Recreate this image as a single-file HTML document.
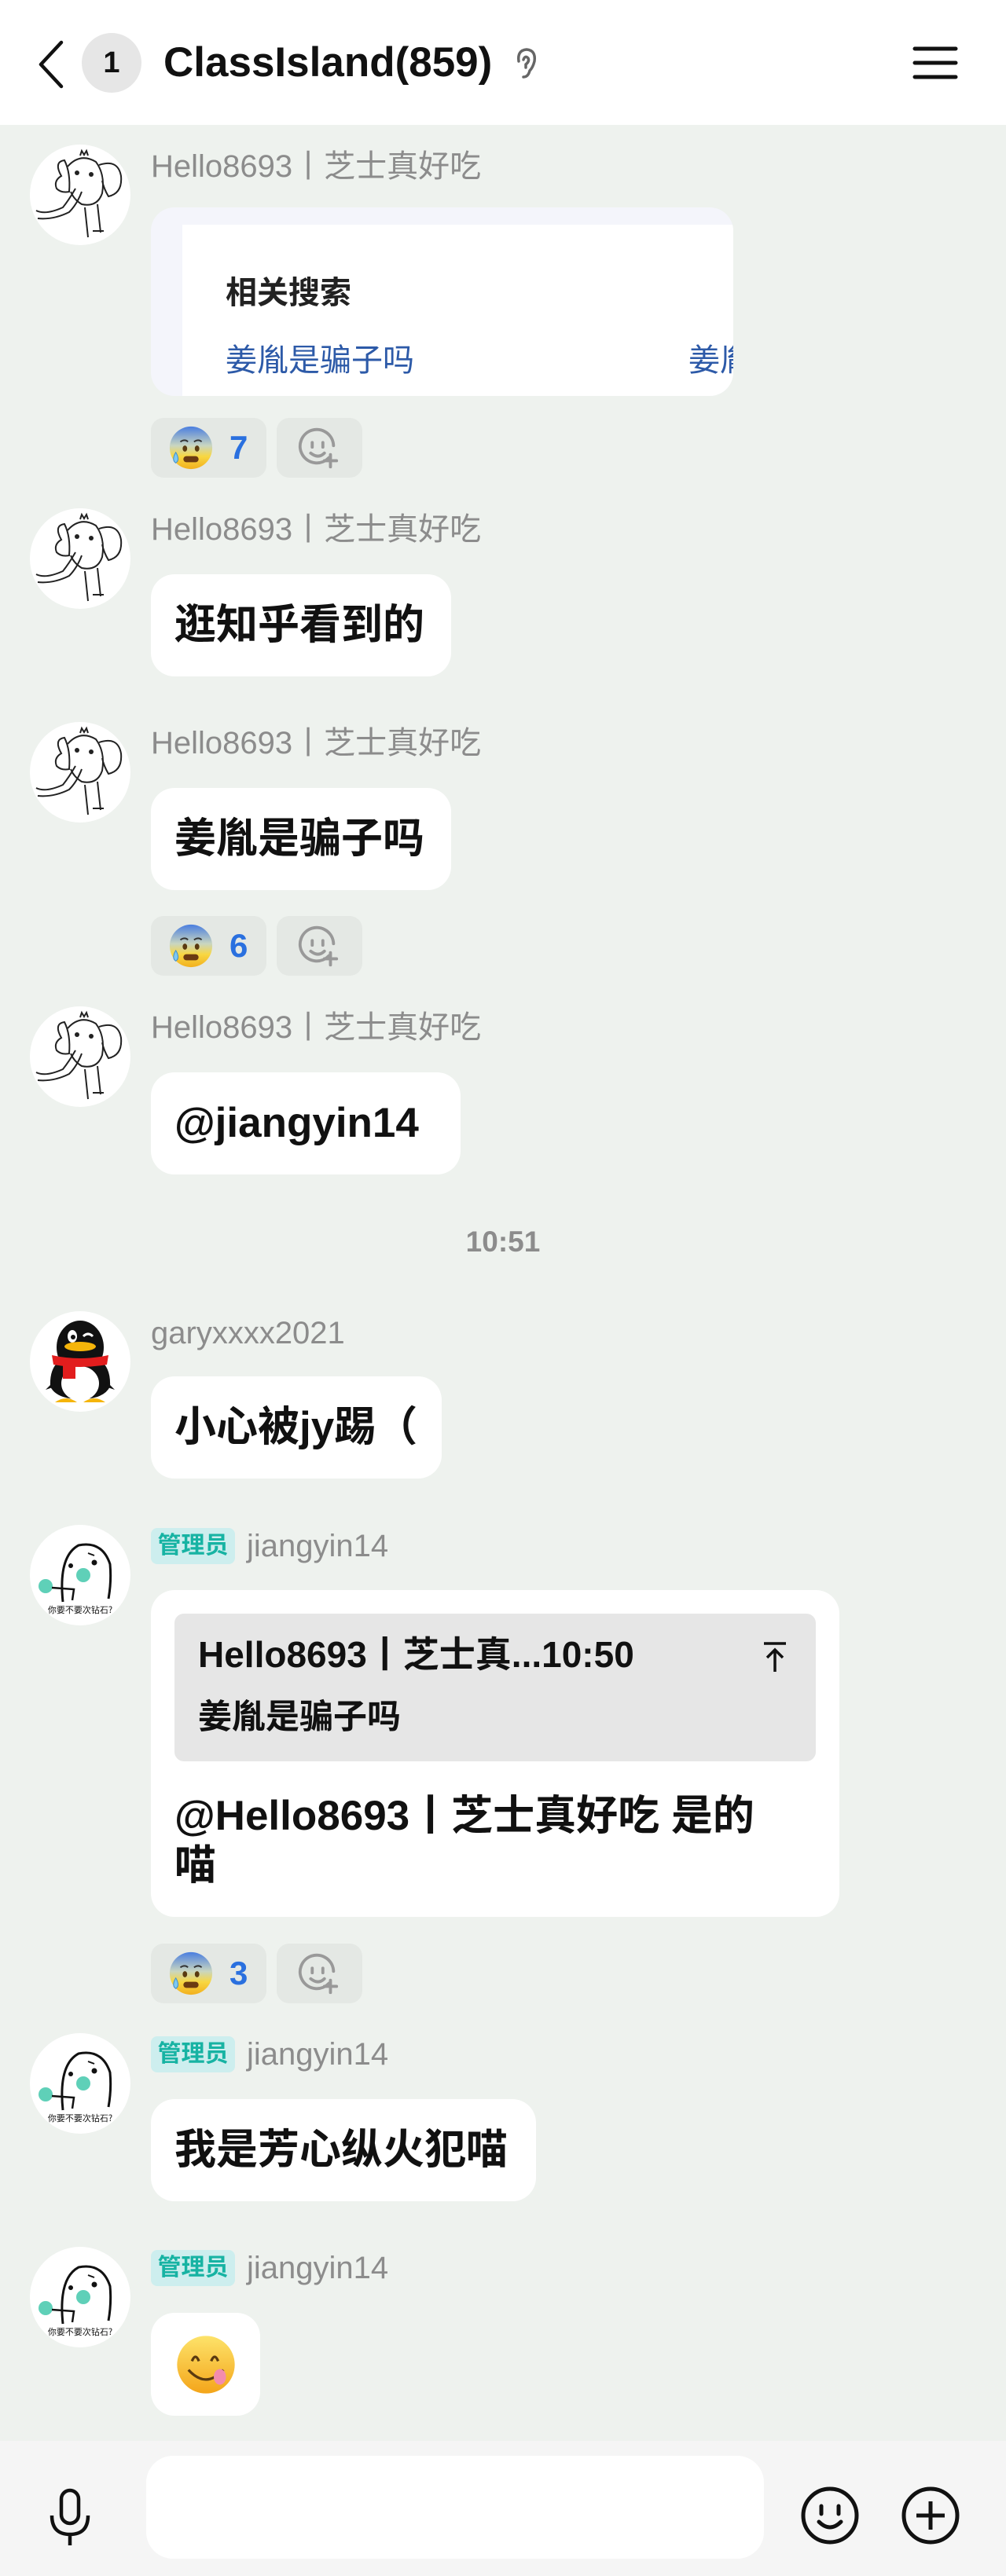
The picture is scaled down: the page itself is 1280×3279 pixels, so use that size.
<!DOCTYPE html>
<html><head><meta charset="utf-8">
<style>
*{margin:0;padding:0;box-sizing:border-box}
body{width:1280px;height:3279px;background:#eef2ee;font-family:"Liberation Sans","Noto Sans CJK SC",sans-serif;position:relative;overflow:hidden}
.a{position:absolute}
.hdr{left:0;top:0;width:1280px;height:159px;background:#fff}
.av{position:absolute;left:38px;width:128px;height:128px;border-radius:50%;background:#fff;overflow:hidden}
.name{position:absolute;left:192px;font-size:40px;color:#8c8c8c;line-height:46px;white-space:nowrap}
.bub{position:absolute;left:192px;background:#fff;border-radius:30px;font-size:53px;font-weight:bold;color:#111;line-height:130px;padding:0 30px;white-space:nowrap}
.rx{position:absolute;height:76px;background:#e4e8e4;border-radius:16px}
.tag{position:absolute;left:192px;width:107px;height:46px;background:#cdeeee;border-radius:8px;color:#17b3a3;font-size:30px;line-height:46px;text-align:center;font-weight:bold}
.num{position:absolute;left:100px;top:12px;font-size:42px;color:#2a70df;font-weight:bold;line-height:52px}
</style></head><body>
<svg width="0" height="0" style="position:absolute">
<defs>
<symbol id="ele" viewBox="0 0 128 128">
<g fill="none" stroke="#222" stroke-width="2">
<path d="M40 40 Q30 22 44 20 Q52 36 50 60 Q40 62 34 56 Q30 46 40 40Z"/>
<path d="M88 26 Q112 18 116 40 Q118 62 100 66 Q94 56 92 46"/>
<path d="M48 28 Q64 10 84 22 Q96 38 92 62 Q86 80 66 76 Q56 70 52 60"/>
<path d="M58 56 Q50 70 42 80 Q20 90 8 84"/>
<path d="M66 60 Q60 76 50 86 Q30 96 10 94"/>
<path d="M86 76 L90 112 M80 110 L94 110 M70 80 L74 118"/>
<path d="M64 14 l2 -6 l3 5 l3 -5 l2 6"/>
</g>
<circle cx="60" cy="36" r="3" fill="#222"/><circle cx="78" cy="38" r="3" fill="#222"/>
</symbol>
<symbol id="meme" viewBox="0 0 128 128">
<path d="M42 98 Q36 40 62 26 Q92 20 102 50 Q104 72 100 94" fill="#fff" stroke="#111" stroke-width="3"/>
<circle cx="52" cy="52" r="3" fill="#111"/><circle cx="82" cy="48" r="3.5" fill="#111"/>
<path d="M74 36 l8 3" stroke="#111" stroke-width="2"/>
<circle cx="68" cy="64" r="9" fill="#5fd0b8"/>
<circle cx="20" cy="78" r="9" fill="#5fd0b8"/>
<path d="M28 80 L56 82 L54 96" fill="none" stroke="#111" stroke-width="2.5"/>
<text x="64" y="112" font-size="11" text-anchor="middle" fill="#111" font-family="Noto Sans CJK SC,sans-serif">你要不要次钻石?</text>
</symbol>
<symbol id="peng" viewBox="0 0 128 128">
<ellipse cx="64" cy="46" rx="30" ry="34" fill="#111"/>
<path d="M26 96 Q24 56 64 56 Q104 56 102 96 Q94 112 64 112 Q34 112 26 96Z" fill="#111"/>
<path d="M30 90 L20 100 L32 96Z M98 90 L108 100 L96 96Z" fill="#111"/>
<ellipse cx="64" cy="92" rx="24" ry="22" fill="#fff"/>
<ellipse cx="54" cy="32" rx="6" ry="8" fill="#fff"/><circle cx="55" cy="33" r="3" fill="#111"/>
<path d="M68 32 q6 -6 12 0" stroke="#fff" stroke-width="3" fill="none"/>
<ellipse cx="64" cy="45" rx="20" ry="6" fill="#f5b50a"/>
<path d="M28 56 Q64 64 100 56 L98 68 Q64 74 30 68Z" fill="#e21d1d"/>
<rect x="42" y="66" width="16" height="20" fill="#e21d1d"/>
<path d="M32 116 Q46 106 60 116Z M68 116 Q82 106 96 116Z" fill="#f5b50a"/>
</symbol>
<symbol id="fear" viewBox="0 0 60 60">
<defs><linearGradient id="fg" x1="0" y1="0" x2="0" y2="1"><stop offset="0" stop-color="#4a7ee0"/><stop offset=".45" stop-color="#c9d6c0"/><stop offset=".7" stop-color="#f8d742"/><stop offset="1" stop-color="#f2b01e"/></linearGradient></defs>
<circle cx="30" cy="30" r="28" fill="url(#fg)"/>
<path d="M16 22 q6 -4 10 0 M34 22 q6 -4 10 0" stroke="#333" stroke-width="2" fill="none"/>
<ellipse cx="22" cy="31" rx="3" ry="4" fill="#5a3a10"/><ellipse cx="38" cy="31" rx="3" ry="4" fill="#5a3a10"/>
<rect x="20" y="41" width="20" height="8" rx="4" fill="#6b3a12"/>
<path d="M10 36 q-6 10 0 14 q6 -4 0 -14Z" fill="#7fc8f0" stroke="#3c8ccc"/>
</symbol>
<symbol id="addre" viewBox="0 0 60 60">
<path d="M44 42 A22 22 0 1 1 50 26" fill="none" stroke="#999" stroke-width="4" stroke-linecap="round"/>
<path d="M22 22 v6 M36 22 v6 M20 36 q10 8 18 0" stroke="#999" stroke-width="4" fill="none" stroke-linecap="round"/>
<path d="M46 38 v16 M38 46 h16" stroke="#999" stroke-width="4" stroke-linecap="round"/>
</symbol>
</defs></svg>

<div class="a hdr"></div>
<svg class="a" style="left:44px;top:50px" width="40" height="64"><path d="M34 4 L8 32 L34 60" fill="none" stroke="#111" stroke-width="4.5" stroke-linecap="round" stroke-linejoin="round"/></svg>
<div class="a" style="left:104px;top:42px;width:76px;height:76px;border-radius:50%;background:#e6e6e6;font-size:38px;font-weight:bold;line-height:76px;text-align:center;color:#111">1</div>
<div class="a" style="left:208px;top:48px;font-size:53px;font-weight:bold;line-height:64px;color:#111">ClassIsland(859)</div>
<svg class="a" style="left:652px;top:58px" width="36" height="46"><path d="M8 20 Q6 6 18 5 Q30 6 28 20 Q26 28 22 32 Q20 40 14 40 M14 18 q2 -6 6 -2 q2 4 -3 8 v4" fill="none" stroke="#666" stroke-width="3.5" stroke-linecap="round"/></svg>
<svg class="a" style="left:1160px;top:56px" width="60" height="48"><path d="M4 6 H56 M4 24 H56 M4 42 H56" stroke="#111" stroke-width="5" stroke-linecap="round"/></svg>

<!-- msg1 -->
<svg class="av" style="top:184px" viewBox="0 0 128 128"><use href="#ele"/></svg>
<div class="name" style="top:189px">Hello8693丨芝士真好吃</div>
<div class="a" style="left:192px;top:264px;width:741px;height:240px;background:#f4f5fb;border-radius:30px;overflow:hidden">
 <div class="a" style="left:40px;top:22px;width:701px;height:218px;background:#fff"></div>
 <div class="a" style="left:95px;top:86px;font-size:40px;font-weight:bold;color:#222;line-height:46px">相关搜索</div>
 <div class="a" style="left:95px;top:172px;font-size:40px;color:#2d5aa8;line-height:46px;white-space:nowrap">姜胤是骗子吗</div>
 <div class="a" style="left:684px;top:172px;font-size:40px;color:#2d5aa8;line-height:46px;white-space:nowrap">姜胤</div>
</div>
<div class="rx" style="left:192px;top:532px;width:147px"><svg class="a" style="left:22px;top:9px" width="58" height="58"><use href="#fear"/></svg><div class="num">7</div></div>
<div class="rx" style="left:352px;top:532px;width:109px"><svg class="a" style="left:24px;top:10px" width="58" height="58"><use href="#addre"/></svg></div>

<!-- msg2 -->
<svg class="av" style="top:647px" viewBox="0 0 128 128"><use href="#ele"/></svg>
<div class="name" style="top:651px">Hello8693丨芝士真好吃</div>
<div class="bub" style="top:731px;width:382px">逛知乎看到的</div>

<!-- msg3 -->
<svg class="av" style="top:919px" viewBox="0 0 128 128"><use href="#ele"/></svg>
<div class="name" style="top:923px">Hello8693丨芝士真好吃</div>
<div class="bub" style="top:1003px;width:382px">姜胤是骗子吗</div>
<div class="rx" style="left:192px;top:1166px;width:147px"><svg class="a" style="left:22px;top:9px" width="58" height="58"><use href="#fear"/></svg><div class="num">6</div></div>
<div class="rx" style="left:352px;top:1166px;width:109px"><svg class="a" style="left:24px;top:10px" width="58" height="58"><use href="#addre"/></svg></div>

<!-- msg4 -->
<svg class="av" style="top:1281px" viewBox="0 0 128 128"><use href="#ele"/></svg>
<div class="name" style="top:1285px">Hello8693丨芝士真好吃</div>
<div class="bub" style="top:1365px;width:394px">@jiangyin14</div>

<div class="a" style="left:0;width:1280px;top:1559px;text-align:center;font-size:37px;font-weight:bold;color:#8c8c8c;line-height:44px">10:51</div>

<!-- msg5 -->
<svg class="av" style="top:1669px" viewBox="0 0 128 128"><use href="#peng"/></svg>
<div class="name" style="top:1674px">garyxxxx2021</div>
<div class="bub" style="top:1752px;width:370px">小心被jy踢（</div>

<!-- msg6 -->
<svg class="av" style="top:1941px" viewBox="0 0 128 128"><use href="#meme"/></svg>
<div class="tag" style="top:1945px">管理员</div>
<div class="name" style="left:314px;top:1945px">jiangyin14</div>
<div class="a" style="left:192px;top:2024px;width:876px;height:416px;background:#fff;border-radius:30px">
 <div class="a" style="left:30px;top:30px;width:816px;height:188px;background:#e6e6e6;border-radius:12px">
  <div class="a" style="left:30px;top:24px;font-size:46px;font-weight:bold;color:#111;line-height:56px;white-space:nowrap">Hello8693丨芝士真...10:50</div>
  <svg class="a" style="left:744px;top:34px" width="40" height="44"><path d="M6 4 H34 M20 12 V40 M10 22 L20 12 L30 22" fill="none" stroke="#111" stroke-width="3.5"/></svg>
  <div class="a" style="left:30px;top:106px;font-size:43px;font-weight:bold;color:#111;line-height:52px">姜胤是骗子吗</div>
 </div>
 <div class="a" style="left:30px;top:256px;width:790px;font-size:53px;font-weight:bold;color:#111;line-height:63px">@Hello8693丨芝士真好吃 是的<br>喵</div>
</div>
<div class="rx" style="left:192px;top:2474px;width:147px"><svg class="a" style="left:22px;top:9px" width="58" height="58"><use href="#fear"/></svg><div class="num">3</div></div>
<div class="rx" style="left:352px;top:2474px;width:109px"><svg class="a" style="left:24px;top:10px" width="58" height="58"><use href="#addre"/></svg></div>

<!-- msg7 -->
<svg class="av" style="top:2588px" viewBox="0 0 128 128"><use href="#meme"/></svg>
<div class="tag" style="top:2592px">管理员</div>
<div class="name" style="left:314px;top:2592px">jiangyin14</div>
<div class="bub" style="top:2672px;width:490px">我是芳心纵火犯喵</div>

<!-- msg8 -->
<svg class="av" style="top:2860px" viewBox="0 0 128 128"><use href="#meme"/></svg>
<div class="tag" style="top:2864px">管理员</div>
<div class="name" style="left:314px;top:2864px">jiangyin14</div>
<div class="a" style="left:192px;top:2944px;width:139px;height:131px;background:#fff;border-radius:30px">
 <svg class="a" style="left:30px;top:26px" width="80" height="80" viewBox="0 0 72 72">
  <defs><linearGradient id="yg" x1="0" y1="0" x2="0" y2="1"><stop offset="0" stop-color="#fde36a"/><stop offset="1" stop-color="#f4a51a"/></linearGradient></defs>
  <circle cx="36" cy="36" r="33" fill="url(#yg)"/>
  <path d="M20 32 q4 -10 8 0 M42 32 q4 -10 8 0" stroke="#5a3a10" stroke-width="3" fill="none"/>
  <path d="M16 42 q20 22 40 0" stroke="#5a3a10" stroke-width="3" fill="none"/>
  <ellipse cx="52" cy="50" rx="7" ry="9" fill="#f38cae"/>
 </svg>
</div>

<!-- bottom bar -->
<div class="a" style="left:0;top:3107px;width:1280px;height:172px;background:#f5f5f5"></div>
<div class="a" style="left:186px;top:3126px;width:786px;height:131px;background:#fff;border-radius:34px"></div>
<svg class="a" style="left:58px;top:3166px" width="64" height="76"><rect x="20" y="4" width="22" height="42" rx="11" fill="none" stroke="#111" stroke-width="4.5"/><path d="M8 36 Q8 60 31 60 Q54 60 54 36 M31 60 V74" fill="none" stroke="#111" stroke-width="4.5"/></svg>
<svg class="a" style="left:1016px;top:3162px" width="80" height="80"><circle cx="40" cy="40" r="34" fill="none" stroke="#111" stroke-width="5"/><path d="M29 28 v10 M51 28 v10 M26 48 q14 14 28 0" fill="none" stroke="#111" stroke-width="5" stroke-linecap="round"/></svg>
<svg class="a" style="left:1144px;top:3162px" width="80" height="80"><circle cx="40" cy="40" r="34" fill="none" stroke="#111" stroke-width="5"/><path d="M40 22 V58 M22 40 H58" stroke="#111" stroke-width="5"/></svg>
</body></html>
